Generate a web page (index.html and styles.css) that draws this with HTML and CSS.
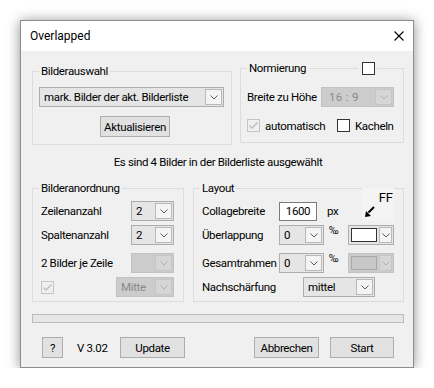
FILE: index.html
```html
<!DOCTYPE html>
<html lang="de">
<head>
    <meta charset="UTF-8">
    <title>Overlapped</title>
    <link rel="stylesheet" href="styles.css">
</head>
<body>
    <div class="window">
        <div class="titlebar">
            <span class="title">Overlapped</span>
            <svg class="close" width="10" height="10" viewBox="0 0 10 10"><path d="M0.5 0.5 L9.5 9.5 M9.5 0.5 L0.5 9.5" stroke="#000" stroke-width="1.1"/></svg>
        </div>

        <div class="body">
            <div class="row top">
                <fieldset class="group sel">
                    <legend>Bilderauswahl</legend>
                    <div class="combo">
                        <span class="val">mark. Bilder der akt. Bilderliste</span>
                        <span class="arrow"><svg width="8" height="5" viewBox="0 0 8 5"><path d="M0.5 0.5 L4 4 L7.5 0.5" fill="none" stroke="#5a5a5a"/></svg></span>
                    </div>
                    <button class="btn refresh">Aktualisieren</button>
                </fieldset>

                <fieldset class="group norm">
                    <legend>
                        <span>Normierung</span>
                        <span class="legend-line"></span>
                        <span class="check"></span>
                    </legend>
                    <div class="line">
                        <span>Breite zu Höhe</span>
                        <div class="combo off ratio">
                            <span class="val">16 : 9</span>
                            <span class="arrow"><svg width="8" height="5" viewBox="0 0 8 5"><path d="M0.5 0.5 L4 4 L7.5 0.5" fill="none" stroke="#b0b0b0"/></svg></span>
                        </div>
                    </div>
                    <div class="checks">
                        <label class="chk first">
                            <span class="check off"><svg width="11" height="11" viewBox="0 0 11 11"><path d="M1.5 5.5 L4 8 L9.5 2.5" fill="none" stroke="#bcbcbc" stroke-width="1.3"/></svg></span>
                            automatisch
                        </label>
                        <label class="chk">
                            <span class="check"></span>
                            Kacheln
                        </label>
                    </div>
                </fieldset>
            </div>

            <p class="info">Es sind 4 Bilder in der Bilderliste ausgewählt</p>

            <div class="row mid">
                <fieldset class="group arr">
                    <legend>Bilderanordnung</legend>
                    <div class="line">
                        <span class="grow">Zeilenanzahl</span>
                        <div class="combo small">
                            <span class="val">2</span>
                            <span class="arrow"><svg width="8" height="5" viewBox="0 0 8 5"><path d="M0.5 0.5 L4 4 L7.5 0.5" fill="none" stroke="#5a5a5a"/></svg></span>
                        </div>
                    </div>
                    <div class="line">
                        <span class="grow">Spaltenanzahl</span>
                        <div class="combo small">
                            <span class="val">2</span>
                            <span class="arrow"><svg width="8" height="5" viewBox="0 0 8 5"><path d="M0.5 0.5 L4 4 L7.5 0.5" fill="none" stroke="#5a5a5a"/></svg></span>
                        </div>
                    </div>
                    <div class="line gap">
                        <span class="grow">2 Bilder je Zeile</span>
                        <div class="combo small off">
                            <span class="val"></span>
                            <span class="arrow"><svg width="8" height="5" viewBox="0 0 8 5"><path d="M0.5 0.5 L4 4 L7.5 0.5" fill="none" stroke="#b0b0b0"/></svg></span>
                        </div>
                    </div>
                    <div class="line">
                        <span class="grow"><span class="check off"><svg width="11" height="11" viewBox="0 0 11 11"><path d="M1.5 5.5 L4 8 L9.5 2.5" fill="none" stroke="#bcbcbc" stroke-width="1.3"/></svg></span></span>
                        <div class="combo off align">
                            <span class="val">Mitte</span>
                            <span class="arrow"><svg width="8" height="5" viewBox="0 0 8 5"><path d="M0.5 0.5 L4 4 L7.5 0.5" fill="none" stroke="#b0b0b0"/></svg></span>
                        </div>
                    </div>
                </fieldset>

                <fieldset class="group lay">
                    <legend>Layout</legend>
                    <div class="line">
                        <span class="lbl">Collagebreite</span>
                        <span class="num">1600</span>
                        <span class="unit">px</span>
                        <div class="ff">
                            <span class="ff-text">FF</span>
                            <svg width="10" height="11" viewBox="0 0 10 11"><path d="M9 1 L3.5 6.5" stroke="#000" stroke-width="2"/><path d="M0 11 L1 5 L6 10 Z" fill="#000"/></svg>
                        </div>
                    </div>
                    <div class="line">
                        <span class="lbl">Überlappung</span>
                        <div class="combo zero">
                            <span class="val">0</span>
                            <span class="arrow"><svg width="8" height="5" viewBox="0 0 8 5"><path d="M0.5 0.5 L4 4 L7.5 0.5" fill="none" stroke="#5a5a5a"/></svg></span>
                        </div>
                        <span class="permille">‰</span>
                        <div class="combo color">
                            <span class="swatch"></span>
                            <span class="arrow"><svg width="8" height="5" viewBox="0 0 8 5"><path d="M0.5 0.5 L4 4 L7.5 0.5" fill="none" stroke="#5a5a5a"/></svg></span>
                        </div>
                    </div>
                    <div class="line gap">
                        <span class="lbl">Gesamtrahmen</span>
                        <div class="combo zero">
                            <span class="val">0</span>
                            <span class="arrow"><svg width="8" height="5" viewBox="0 0 8 5"><path d="M0.5 0.5 L4 4 L7.5 0.5" fill="none" stroke="#5a5a5a"/></svg></span>
                        </div>
                        <span class="permille">‰</span>
                        <div class="combo color off">
                            <span class="swatch"></span>
                            <span class="arrow"><svg width="8" height="5" viewBox="0 0 8 5"><path d="M0.5 0.5 L4 4 L7.5 0.5" fill="none" stroke="#b0b0b0"/></svg></span>
                        </div>
                    </div>
                    <div class="line">
                        <span class="lbl wide">Nachschärfung</span>
                        <div class="combo sharp">
                            <span class="val">mittel</span>
                            <span class="arrow"><svg width="8" height="5" viewBox="0 0 8 5"><path d="M0.5 0.5 L4 4 L7.5 0.5" fill="none" stroke="#5a5a5a"/></svg></span>
                        </div>
                    </div>
                </fieldset>
            </div>

            <div class="progress"></div>

            <div class="footer">
                <button class="btn help">?</button>
                <span class="ver">V 3.02</span>
                <button class="btn">Update</button>
                <span class="spacer"></span>
                <button class="btn">Abbrechen</button>
                <button class="btn start">Start</button>
            </div>
        </div>
    </div>
</body>
</html>
```

FILE: styles.css
```css
* {
    box-sizing: border-box;
}

body {
    margin: 0;
    background: white;
    font-family: Roboto, 'Noto Sans', sans-serif;
    font-size: 11.5px;
    letter-spacing: -0.35px;
    color: #000;
    white-space: nowrap;
}

.window {
    margin: 20px 0 0 20px;
    width: 394px;
    height: 348px;
    border: 1px solid #8c8c8c;
    background: #f0f0f0;
    box-shadow: 0 1px 12px rgba(0,0,0,0.45);
    display: flex;
    flex-direction: column;
}

.titlebar {
    height: 30px;
    background: white;
    display: flex;
    align-items: center;
    justify-content: space-between;
    padding: 0 9px;
}

.title {
    font-size: 12px;
    letter-spacing: 0;
}

.body {
    flex: 1;
    padding: 10px 9px 0 11px;
}

.row {
    display: flex;
    align-items: flex-start;
}

.row.top {
    gap: 8px;
}

.row.mid {
    gap: 9px;
    margin-top: 12px;
}

.group {
    margin: 0;
    min-width: 0;
    border: 1px solid #dcdcdc;
}

.group legend {
    padding: 0 2px;
    line-height: 14px;
}

.sel {
    width: 200px;
    margin-top: 3px;
    padding: 9px 7px 7px 6px;
}

.norm {
    width: 164px;
    padding: 12px 9px 10px 6px;
}

.norm legend {
    display: flex;
    align-items: center;
    width: 130px;
}

.legend-line {
    flex: 1;
    height: 1px;
    margin: 0 4px;
    background: #dcdcdc;
}

.arr {
    width: 152px;
    padding: 6px 9px 4px 8px;
}

.lay {
    width: 211px;
    padding: 6px 9px 4px 8px;
}

.arr legend,
.lay legend {
    margin-left: -2px;
}

.line {
    display: flex;
    align-items: center;
    height: 20px;
}

.line + .line {
    margin-top: 4px;
}

.line.gap {
    margin-top: 8px;
}

.grow {
    flex: 1;
    display: flex;
}

.combo {
    display: flex;
    height: 20px;
    padding: 1px;
    border: 1px solid #adadad;
    background: #e5e5e5;
}

.combo .val {
    flex: 1;
    padding-left: 3px;
    line-height: 16px;
    overflow: hidden;
}

.combo .arrow {
    width: 17px;
    flex: none;
    border: 1px solid #b9b9b9;
    background: #f4f4f4;
    display: flex;
    align-items: center;
    justify-content: center;
}

.combo.off {
    border-color: #c2c2c2;
    background: #cccccc;
    color: #8a8a8a;
}

.combo.off .arrow {
    border-color: #c6c6c6;
    background: #d6d6d6;
}

.ratio {
    width: 73px;
    margin-left: auto;
}

.ratio .val {
    padding-left: 6px;
    letter-spacing: 0.3px;
}

.small {
    width: 43px;
}

.align {
    width: 58px;
}

.zero {
    width: 45px;
}

.sharp {
    width: 72px;
}

.color {
    width: 46px;
    margin-left: auto;
}

.color .swatch {
    flex: 1;
    margin: 1px 2px 1px 1px;
    border: 1px solid #333;
    background: white;
}

.color .arrow {
    width: 13px;
}

.color.off .swatch {
    border-color: #a8a8a8;
    background: #c8c8c8;
}

.btn {
    height: 21px;
    width: 65px;
    padding: 0;
    border: 1px solid #adadad;
    background: #e1e1e1;
    font-family: inherit;
    font-size: 11.5px;
    letter-spacing: -0.35px;
    color: #000;
}

.refresh {
    display: block;
    width: 70px;
    margin: 9px 0 0 61px;
}

.check {
    width: 13px;
    height: 13px;
    flex: none;
    border: 1px solid #333;
    background: white;
    display: inline-flex;
    align-items: center;
    justify-content: center;
}

.check.off {
    border-color: #c4c4c4;
    background: #f0f0f0;
}

.checks {
    display: flex;
    align-items: center;
    height: 13px;
    margin-top: 12px;
}

.chk {
    display: flex;
    align-items: center;
    gap: 5px;
}

.chk.first {
    width: 90px;
}

.info {
    margin: 10px 0 0;
    line-height: 14px;
    text-align: center;
}

.lbl {
    width: 77px;
    flex: none;
}

.lbl.wide {
    width: 101px;
}

.num {
    width: 38px;
    height: 19px;
    border: 1px solid #7a7a7a;
    background: white;
    text-align: center;
    line-height: 17px;
}

.unit {
    margin-left: 10px;
}

.permille {
    align-self: flex-start;
    margin: -1px 0 0 5px;
    line-height: 14px;
    font-size: 10px;
}

.ff {
    width: 32px;
    height: 33px;
    margin-left: auto;
    align-self: flex-end;
    background: #f4f4f4;
    display: flex;
    flex-direction: column;
    justify-content: space-between;
    padding: 4px 1px 4px 3px;
}

.ff-text {
    align-self: flex-end;
    font-size: 13px;
    letter-spacing: 0;
    line-height: 11px;
}

.progress {
    margin-top: 12px;
    height: 9px;
    border: 1px solid #bcbcbc;
    background: #e6e6e6;
}

.footer {
    display: flex;
    align-items: center;
    margin-top: 14px;
    padding: 0 10px;
}

.btn.help {
    width: 21px;
}

.ver {
    width: 43px;
    margin-left: 14px;
}

.spacer {
    flex: 1;
}

.btn.start {
    width: 64px;
    margin-left: 11px;
}
```
